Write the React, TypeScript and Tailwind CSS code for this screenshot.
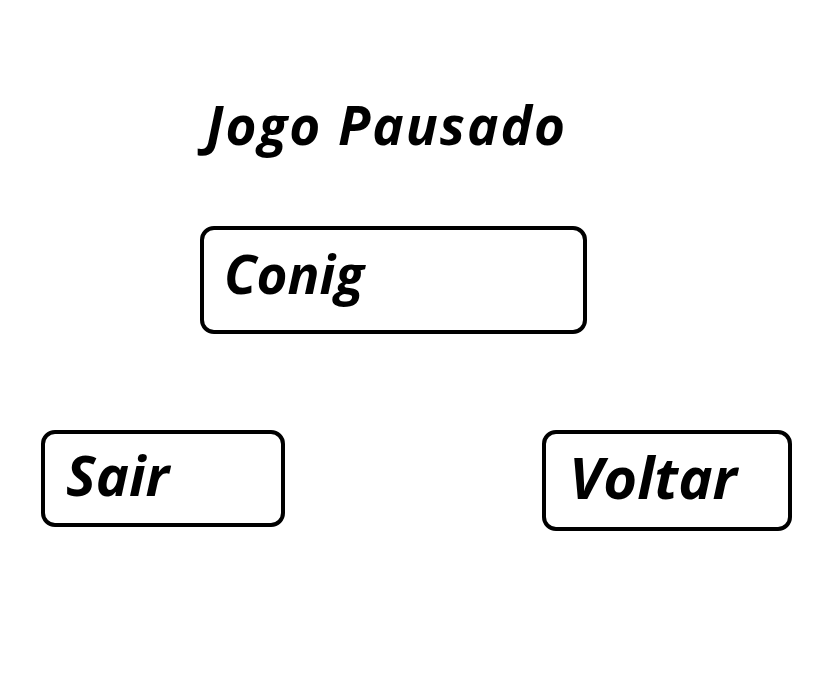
export default function App() {
  return (
    <div className="w-[839px] h-[685px] bg-white text-black font-['Open_Sans',sans-serif] italic font-bold">
      <div className="pt-[98px] pl-[206px]">
        <h1 className="text-[53px] leading-none tracking-[2px]">Jogo Pausado</h1>
      </div>

      <div className="mt-[75px] ml-[200px] w-[387px] h-[108px] border-4 border-black rounded-[14px] pt-[17px] pl-[20px]">
        <span className="text-[53px] leading-none">Conig</span>
      </div>

      <div className="mt-[96px] flex items-start justify-between pl-[41px] pr-[47px]">
        <div className="w-[244px] h-[97px] border-4 border-black rounded-[14px] pt-[12px] pl-[21px]">
          <span className="text-[56px] leading-none">Sair</span>
        </div>
        <div className="w-[250px] h-[101px] border-4 border-black rounded-[14px] pt-[14px] pl-[23px]">
          <span className="text-[58px] leading-none">Voltar</span>
        </div>
      </div>
    </div>
  );
}
